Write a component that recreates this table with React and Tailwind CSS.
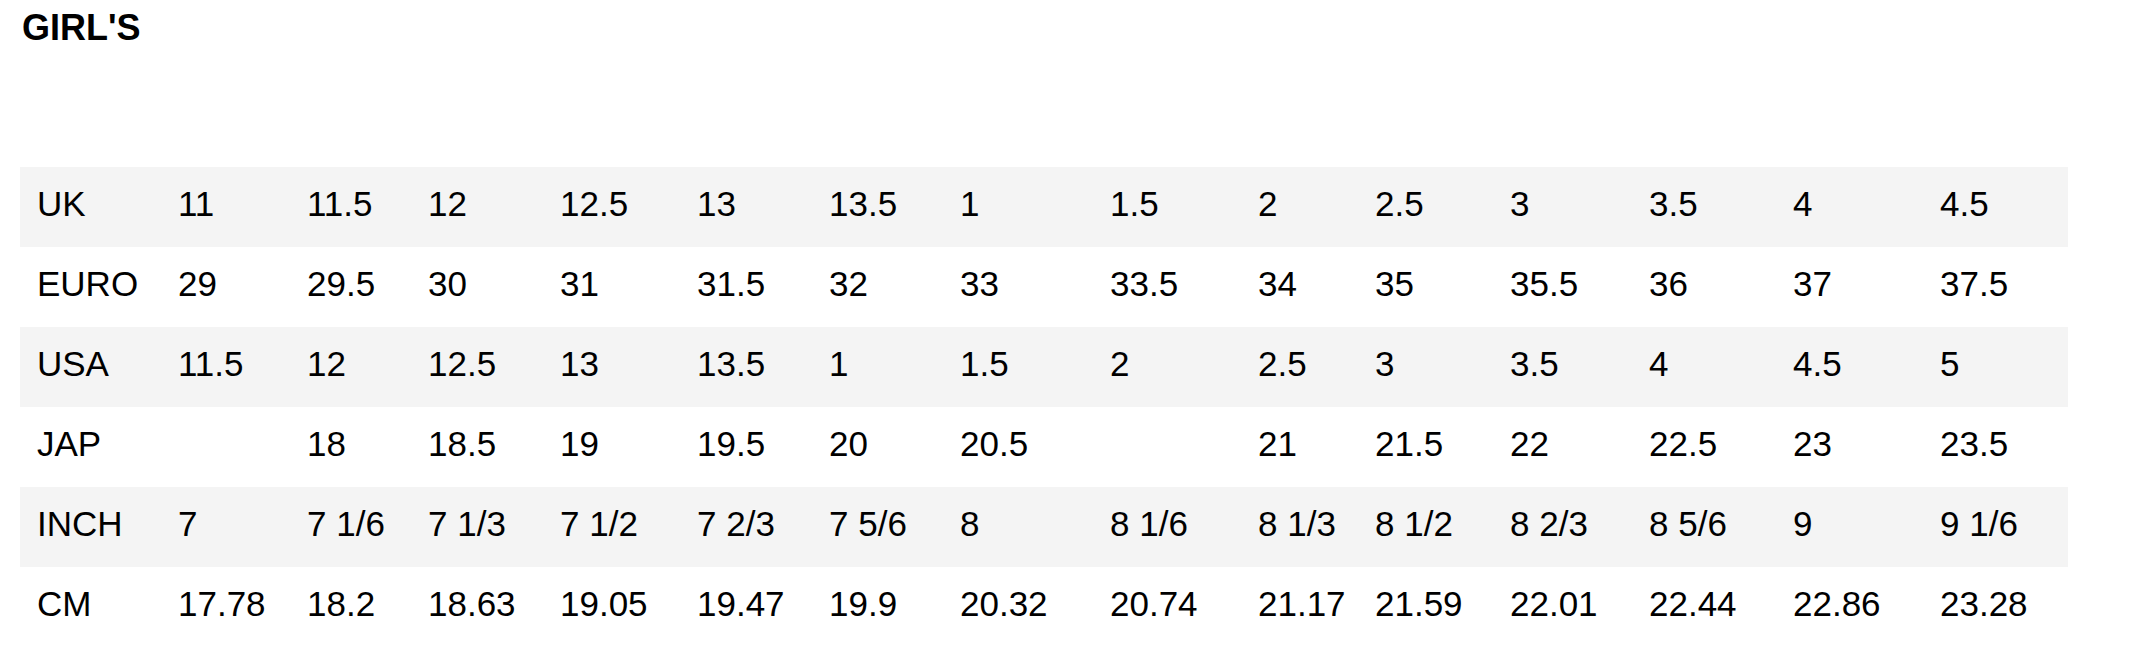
import React from 'react';

const widths = ['w-[141px]', 'w-[129px]', 'w-[121px]', 'w-[132px]', 'w-[137px]', 'w-[132px]', 'w-[131px]', 'w-[150px]', 'w-[148px]', 'w-[117px]', 'w-[135px]', 'w-[139px]', 'w-[144px]', 'w-[147px]', 'w-[145px]'];

const rows = [
  ['UK', '11', '11.5', '12', '12.5', '13', '13.5', '1', '1.5', '2', '2.5', '3', '3.5', '4', '4.5'],
  ['EURO', '29', '29.5', '30', '31', '31.5', '32', '33', '33.5', '34', '35', '35.5', '36', '37', '37.5'],
  ['USA', '11.5', '12', '12.5', '13', '13.5', '1', '1.5', '2', '2.5', '3', '3.5', '4', '4.5', '5'],
  ['JAP', '', '18', '18.5', '19', '19.5', '20', '20.5', '', '21', '21.5', '22', '22.5', '23', '23.5'],
  ['INCH', '7', '7 1/6', '7 1/3', '7 1/2', '7 2/3', '7 5/6', '8', '8 1/6', '8 1/3', '8 1/2', '8 2/3', '8 5/6', '9', '9 1/6'],
  ['CM', '17.78', '18.2', '18.63', '19.05', '19.47', '19.9', '20.32', '20.74', '21.17', '21.59', '22.01', '22.44', '22.86', '23.28'],
];

export default function App() {
  return (
    <div className="bg-white w-[2130px] h-[659px] pl-[20px] pt-[8px] text-black font-['Liberation_Sans',sans-serif]">
      <h2 className="pl-[2px] text-[36px] leading-[40px] font-bold">GIRL'S</h2>
      <table className="mt-[119px] table-fixed w-[2048px] border-collapse">
        <colgroup>
          {widths.map((w, i) => (
            <col key={i} className={w} />
          ))}
        </colgroup>
        <tbody>
          {rows.map((r, i) => (
            <tr key={r[0]} className={i % 2 === 0 ? 'bg-[#f4f4f4]' : 'bg-white'}>
              {r.map((c, j) => (
                <td key={j} className="h-[80px] pl-[17px] pb-[6px] text-[35px] leading-[40px] whitespace-nowrap align-middle">
                  {c}
                </td>
              ))}
            </tr>
          ))}
        </tbody>
      </table>
    </div>
  );
}
